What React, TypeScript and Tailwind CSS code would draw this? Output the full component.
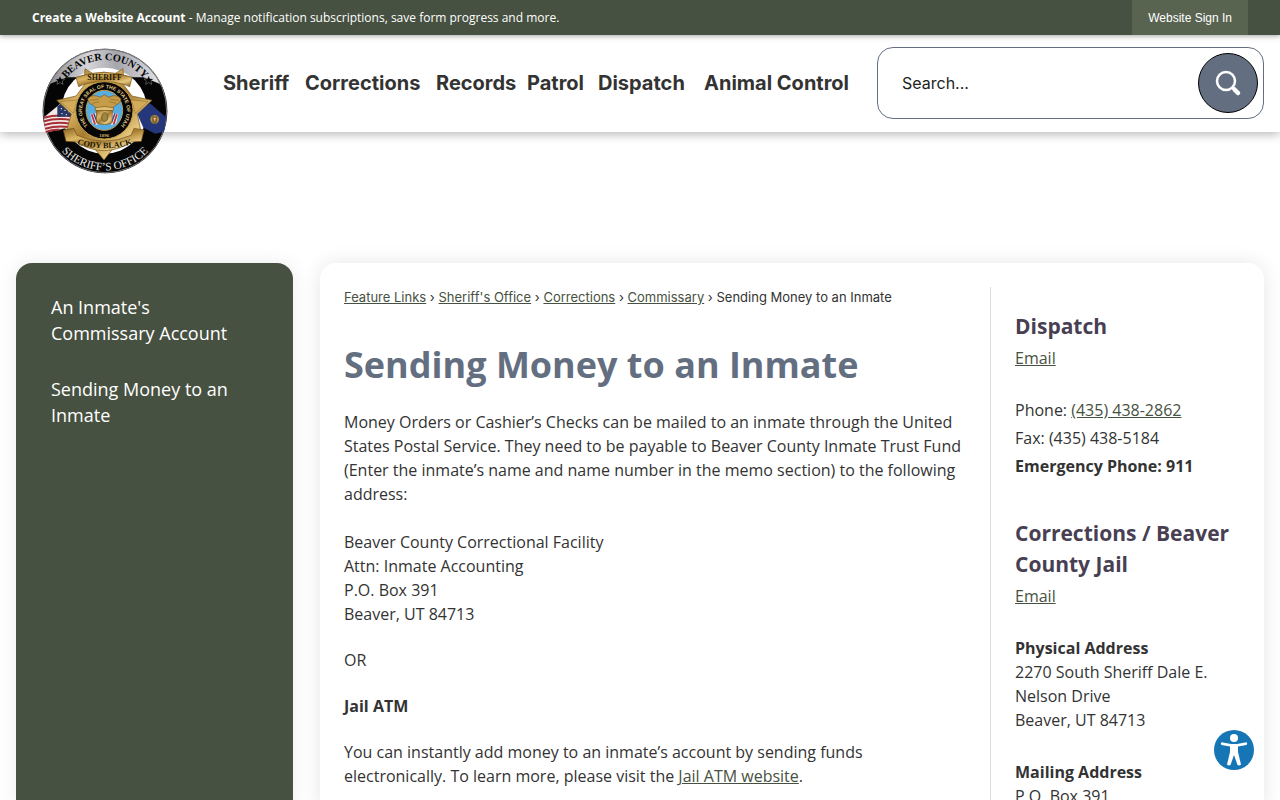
import React, { useState } from 'react';

const navItems = ['Sheriff', 'Corrections', 'Records', 'Patrol', 'Dispatch', 'Animal Control'];

const crumbs = ['Feature Links', "Sheriff's Office", 'Corrections', 'Commissary'];

const sideLinks = ["An Inmate's Commissary Account", 'Sending Money to an Inmate'];

const linkClass = 'text-[#475141] underline';

function SheriffLogo() {
  return (
    <svg viewBox="36 24 378 378" className="block w-full" role="img" aria-label="Beaver County Sheriff's Office">
      <defs>
        <linearGradient id="silver" x1="0" y1="0" x2="1" y2="0">
          <stop offset="0" stopColor="#85858b" />
          <stop offset="0.35" stopColor="#d6d6da" />
          <stop offset="0.6" stopColor="#a6a6ad" />
          <stop offset="1" stopColor="#e6e6ea" />
        </linearGradient>
        <linearGradient id="gold" x1="0" y1="0" x2="1" y2="1">
          <stop offset="0" stopColor="#8c6420" />
          <stop offset="0.3" stopColor="#dcb865" />
          <stop offset="0.5" stopColor="#a87c30" />
          <stop offset="0.75" stopColor="#e6c87e" />
          <stop offset="1" stopColor="#86601f" />
        </linearGradient>
        <clipPath id="disc">
          <circle cx="225" cy="213" r="186" />
        </clipPath>
        <path id="topArc" d="M 82 163 A 151 151 0 0 1 368 163" />
        <path id="bottomArc" d="M 53 256 A 177 177 0 0 0 397 256" />
        <path id="sealArc" d="M 184 266 A 67 67 0 1 1 262 266" />
        <path id="nameArc" d="M 134 310 Q 224 340 314 310" />
      </defs>
      <circle cx="225" cy="213" r="187" fill="#050505" />
      <g clipPath="url(#disc)">
        <path d="M50 20 H400 V136 L340 112 H110 L50 136 Z" fill="url(#silver)" />
      </g>
      <circle cx="225" cy="213" r="185" fill="none" stroke="#77777b" strokeWidth="3" />
      <circle cx="223" cy="212" r="129" fill="#fff" />

      {/* flags */}
      <path d="M42 232 L90 192 L132 214 L120 262 L46 278 Z" fill="#f3e9e6" />
      <g stroke="#a62d36" strokeWidth="6" fill="none">
        <path d="M42 233 Q80 222 125 229" />
        <path d="M42 244 Q80 233 123 240" />
        <path d="M43 255 Q80 244 121 251" />
        <path d="M45 266 Q80 256 118 261" />
        <path d="M47 276 Q68 268 88 269" />
      </g>
      <path d="M82 199 L92 192 L132 214 L126 229 L82 231 Z" fill="#263765" />
      <g fill="#fff">
        <circle cx="94" cy="206" r="2" />
        <circle cx="105" cy="211" r="2" />
        <circle cx="116" cy="215" r="2" />
        <circle cx="96" cy="221" r="2" />
        <circle cx="109" cy="224" r="2" />
      </g>
      <path d="M318 214 L360 190 L408 232 L402 275 L376 281 L340 263 Z" fill="#25377b" />
      <circle cx="374" cy="238" r="13" fill="#b6893f" />
      <path d="M366 229 L382 229 L380 247 L374 253 L367 246 Z" fill="#7a6035" />
      <path d="M370 233 L378 233 L374 246 Z" fill="#e4c277" />

      {/* star badge */}
      <path
        d="M165 86 L194 104 L222 96 L250 104 L279 86 L282 136 L306 168 L366 181 L322 222 L332 270 L278 304 L250 324 L222 360 L192 324 L164 304 L110 270 L124 222 L80 181 L138 168 L162 136 Z"
        fill="url(#gold)"
        stroke="#76541a"
        strokeWidth="2"
      />
      <path d="M92 185 L142 180 L130 220 Z M354 185 L304 180 L316 220 Z" fill="#d4ac59" stroke="#6c4b17" />
      <path d="M138 112 Q222 82 306 112 L299 140 L282 133 Q222 116 162 133 L146 140 Z" fill="url(#gold)" stroke="#73501a" strokeWidth="2" />
      <path d="M100 270 L132 265 L141 286 Q222 321 303 286 L312 265 L342 270 L334 304 L305 306 Q222 358 139 306 L108 304 Z" fill="url(#gold)" stroke="#73501a" strokeWidth="2" />
      <circle cx="223" cy="211" r="86" fill="#060606" stroke="#c39b4a" strokeWidth="3" />
      <ellipse cx="223" cy="211" rx="55" ry="60" fill="#56ade2" stroke="#c39b4a" strokeWidth="3" />

      {/* seal: wings over the beehive shield, a flag on each side */}
      <path d="M181 222 L199 218 L203 256 L187 250 Z M265 222 L247 218 L243 256 L259 250 Z" fill="#f0d9dc" />
      <path d="M185 223 L195 253 M261 223 L251 253" stroke="#b3353f" strokeWidth="5" />
      <path d="M191 220 L201 246 M255 220 L245 246" stroke="#2d4283" strokeWidth="4" />
      <path
        d="M173 176 Q188 160 211 172 L217 168 Q223 160 230 168 L236 172 Q258 160 273 176 Q272 190 256 196 L246 206 L200 206 L190 196 Q174 190 173 176 Z"
        fill="#c59c48"
        stroke="#765319"
        strokeWidth="2"
      />
      <path d="M180 181 L205 178 M187 190 L208 185 M266 181 L241 178 M259 190 L238 185" stroke="#8d682a" strokeWidth="2" />
      <path d="M195 203 Q223 196 251 203 L249 212 H197 Z" fill="#e0be72" stroke="#765319" strokeWidth="2" />
      <path d="M199 212 H247 L246 248 Q223 259 200 248 Z" fill="url(#gold)" stroke="#765319" strokeWidth="2" />
      <ellipse cx="224" cy="231" rx="9" ry="13" fill="#9b8647" stroke="#66501c" strokeWidth="2" />

      {/* stars */}
      <g fill="#050505" stroke="#ddd" strokeWidth="1">
        <path d="M90 107 L94 116 L104 117 L97 123 L99 133 L90 128 L81 133 L83 123 L76 117 L86 116 Z" />
        <path d="M356 107 L360 116 L370 117 L363 123 L365 133 L356 128 L347 133 L349 123 L342 117 L352 116 Z" />
      </g>

      <g fontFamily="Liberation Serif, serif" fontWeight="700" textAnchor="middle">
        <text fontSize="31" fill="#050505">
          <textPath href="#topArc" startOffset="50%">BEAVER COUNTY</textPath>
        </text>
        <text fontSize="34" fontWeight="400" fill="#e9e9e9">
          <textPath href="#bottomArc" startOffset="50%">SHERIFF’S OFFICE</textPath>
        </text>
        <text x="224" y="121" fontSize="24" fill="#231806">SHERIFF</text>
        <text fontSize="25" fill="#231806">
          <textPath href="#nameArc" startOffset="50%">CODY BLACK</textPath>
        </text>
        <text x="223" y="291" fontSize="15" fill="#d0ae67">1896</text>
      </g>
      <text fontFamily="Liberation Sans, sans-serif" fontSize="15" fontWeight="700" fill="#e4ca88" textAnchor="middle">
        <textPath href="#sealArc" startOffset="50%">THE GREAT SEAL OF THE STATE OF UTAH</textPath>
      </text>
    </svg>
  );
}

function SearchBox() {
  const [query, setQuery] = useState('');

  return (
    <form
      onSubmit={(e) => e.preventDefault()}
      className="flex h-[72px] items-center rounded-2xl border border-[#636f81] bg-white pr-[5px] pl-6"
    >
      <input
        type="text"
        aria-label="Search"
        placeholder="Search..."
        value={query}
        onChange={(e) => setQuery(e.target.value)}
        className="min-w-0 flex-1 bg-transparent font-['Inter',sans-serif] text-base text-black outline-none placeholder:text-[#222]"
      />
      <button
        type="submit"
        aria-label="Search"
        className="flex size-[60px] shrink-0 items-center justify-center rounded-full border border-black bg-[#636f81] text-white"
      >
        <svg viewBox="0 0 28 28" className="size-7" fill="none" stroke="currentColor" strokeLinecap="round">
          <circle cx="12" cy="12" r="9" strokeWidth="2.5" />
          <path d="M18.5 18.5 L20 20" strokeWidth="2.5" />
          <path d="M20.5 20.5 L24 24" strokeWidth="4.5" />
        </svg>
      </button>
    </form>
  );
}

export default function App() {
  return (
    <div className="min-h-screen bg-white font-['Open_Sans',sans-serif] text-base leading-6 text-[#333]">
      <div className="relative z-20 flex h-[35px] items-center justify-between bg-[#475141] px-8 text-xs text-white shadow-[0_1px_5px_rgba(71,81,65,0.5)]">
        <p>
          <a href="#account" className="font-bold">Create a Website Account</a> - Manage notification subscriptions, save form progress and more.
        </p>
        <a href="#signin" className="flex h-full items-center bg-[#586350] px-4 font-['Liberation_Sans',sans-serif]">
          Website Sign In
        </a>
      </div>

      <header className="relative z-10 grid h-[97px] grid-cols-[126px_1fr_387px] items-start bg-white pr-4 pl-[42px] shadow-[0_2px_10px_rgba(0,0,0,0.3)]">
        <a href="#home" className="mt-[13px] block">
          <SheriffLogo />
        </a>
        <nav className="mr-[25px] ml-[55px] grid h-24 grid-cols-[82fr_131fr_91fr_71fr_106fr_148fr] items-center font-['Inter',sans-serif] text-xl font-bold">
          {navItems.map((item) => (
            <a key={item} href="#nav" className="whitespace-nowrap">{item}</a>
          ))}
        </nav>
        <div className="pt-3">
          <SearchBox />
        </div>
      </header>

      <div className="grid grid-cols-[277fr_944fr] gap-[27px] px-4 pt-[131px]">
        <aside className="rounded-t-2xl bg-[#475141] pt-[31px] pr-12 pl-[35px] shadow-[0_0_20px_rgba(0,0,0,0.08)]">
          <ul className="space-y-[30px] text-lg leading-[26px] text-white">
            {sideLinks.map((label) => (
              <li key={label}>
                <a href="#side">{label}</a>
              </li>
            ))}
          </ul>
        </aside>

        <div className="grid grid-cols-[1fr_250px] gap-6 rounded-t-2xl bg-white px-6 pt-6 shadow-[0_0_20px_rgba(0,0,0,0.1)]">
          <main>
            <nav aria-label="Breadcrumb" className="font-['Inter',sans-serif] text-[13px] leading-5">
              {crumbs.map((crumb) => (
                <span key={crumb}>
                  <a href="#crumb" className={linkClass}>{crumb}</a>
                  {' › '}
                </span>
              ))}
              Sending Money to an Inmate
            </nav>

            <h1 className="mt-8 text-4xl leading-[52px] font-bold text-[#636f81]">Sending Money to an Inmate</h1>

            <div className="mt-[19px] space-y-[22px]">
              <p>
                Money Orders or Cashier’s Checks can be mailed to an inmate through the United States Postal Service. They need to be payable to Beaver County Inmate Trust Fund (Enter the inmate’s name and name number in the memo section) to the following address:
                <br />
                <br />
                Beaver County Correctional Facility
                <br />
                Attn: Inmate Accounting
                <br />
                P.O. Box 391
                <br />
                Beaver, UT 84713
              </p>
              <p>OR</p>
              <p className="font-bold">Jail ATM</p>
              <p>
                You can instantly add money to an inmate’s account by sending funds electronically. To learn more, please visit the{' '}
                <a href="#atm" className={linkClass}>Jail ATM website</a>.
              </p>
            </div>
          </main>

          <aside className="border-l border-[#ddd] pt-6 pl-6">
            <section>
              <h2 className="text-[21px] leading-[31px] font-bold text-[#483f53]">Dispatch</h2>
              <p className="mt-1">
                <a href="#email" className={linkClass}>Email</a>
              </p>
              <div className="mt-[26px] leading-7">
                <p>
                  Phone: <a href="tel:4354382862" className={linkClass}>(435) 438-2862</a>
                </p>
                <p>Fax: (435) 438-5184</p>
                <p className="font-bold">Emergency Phone: 911</p>
              </div>
            </section>

            <section className="mt-[38px]">
              <h2 className="text-[21px] leading-[31px] font-bold text-[#483f53]">Corrections / Beaver County Jail</h2>
              <p className="mt-1">
                <a href="#email" className={linkClass}>Email</a>
              </p>
              <address className="mt-7 not-italic">
                <strong className="block">Physical Address</strong>
                2270 South Sheriff Dale E. Nelson Drive
                <br />
                Beaver, UT 84713
              </address>
              <address className="mt-7 not-italic">
                <strong className="block">Mailing Address</strong>
                P.O. Box 391
              </address>
            </section>
          </aside>
        </div>
      </div>

      <button type="button" aria-label="Accessibility options" className="fixed right-[26px] bottom-[30px] z-30 size-10">
        <svg viewBox="0 0 40 40" className="size-10">
          <circle cx="20" cy="20" r="20" fill="#1675b5" />
          <g fill="#fff">
            <circle cx="20" cy="8" r="4" />
            <path d="M7.5 12.2 L17 14 H23 L32.5 12.2 Q34 13.8 32.5 15 L24 16.5 V22 L27 34.5 Q25.5 36 23.5 35 L20 25 L16.5 35 Q14.5 36 13 34.5 L16 22 V16.5 L7.5 15 Q6 13.8 7.5 12.2 Z" />
          </g>
        </svg>
      </button>
    </div>
  );
}
